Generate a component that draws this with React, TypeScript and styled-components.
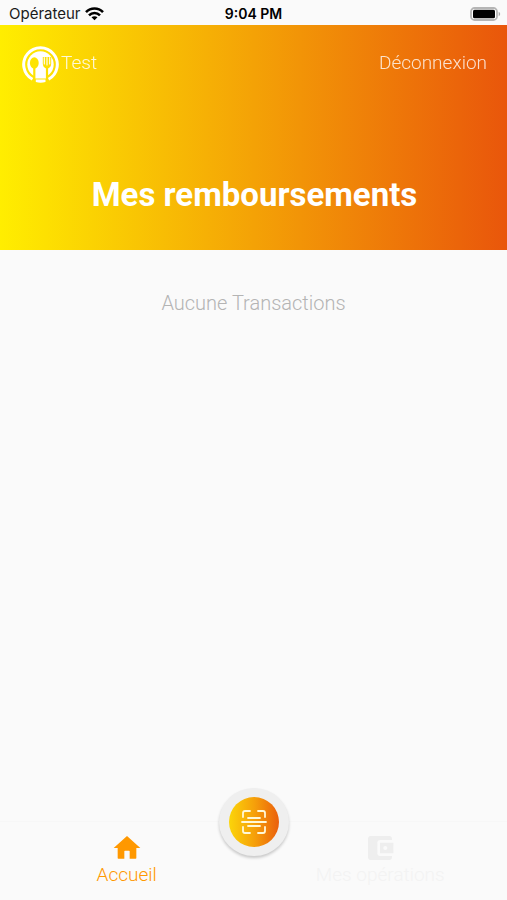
import React from "react";
import styled, { createGlobalStyle } from "styled-components";

const GlobalStyle = createGlobalStyle`
  *, *::before, *::after { box-sizing: border-box; }
  body {
    margin: 0;
    background: #fafafa;
    font-family: Roboto, "Liberation Sans", sans-serif;
  }
`;

const Screen = styled.div`
  display: flex;
  flex-direction: column;
  min-height: 100vh;
  background: #fafafa;
`;

const StatusBar = styled.div`
  display: grid;
  grid-template-columns: 1fr auto 1fr;
  align-items: center;
  height: 25px;
  padding: 2px 6px 0;
  font: 400 15px/20px Inter, "Liberation Sans", sans-serif;
  color: #1a1a1a;
`;

const Carrier = styled.div`
  display: flex;
  align-items: center;
  gap: 4px;
  padding-left: 3px;
`;

const Clock = styled.time`
  font-size: 14px;
  font-weight: 600;
  color: #000;
`;

const Battery = styled.svg`
  justify-self: end;
`;

const Header = styled.header`
  display: flex;
  flex-direction: column;
  height: 225px;
  padding: 20px 20px 0 22px;
  background: linear-gradient(90deg, #ffee00 0%, #f4a206 50%, #e9560b 100%);
  color: #fff;
`;

const TopRow = styled.div`
  display: flex;
  align-items: center;
  justify-content: space-between;
  height: 38px;
`;

const Account = styled.div`
  display: flex;
  align-items: center;
  gap: 2px;
`;

const AccountName = styled.span`
  padding-bottom: 3px;
  font-size: 19px;
  font-weight: 300;
  line-height: 24px;
  opacity: 0.85;
`;

const LogoutButton = styled.button`
  padding: 0 0 3px;
  border: 0;
  background: none;
  color: #fff;
  font: 300 19px/24px Roboto, sans-serif;
  opacity: 0.8;
  cursor: pointer;
`;

const Title = styled.h1`
  margin: 90px 0 0;
  font-size: 33px;
  font-weight: 700;
  line-height: 44px;
  text-align: center;
`;

const Content = styled.main`
  flex: 1;
  padding-top: 40px;
`;

const EmptyMessage = styled.p`
  margin: 0;
  font-size: 20px;
  font-weight: 300;
  line-height: 26px;
  text-align: center;
  color: #b4b4b4;
`;

const TabBar = styled.nav`
  position: relative;
  display: grid;
  grid-template-columns: 1fr 1fr;
  height: 79px;
  border-top: 1px solid #f7f7f7;
`;

const Tab = styled.a<{ $active?: boolean }>`
  display: flex;
  flex-direction: column;
  align-items: center;
  padding-top: 10px;
  color: ${(p) => (p.$active ? "#ff9800" : "#eeeeee")};
  text-decoration: none;
`;

const TabLabel = styled.span<{ $faint?: boolean }>`
  font-size: 19px;
  font-weight: 300;
  line-height: 22px;
  color: ${(p) => (p.$faint ? "#f3f3f3" : "inherit")};
`;

const ScanButton = styled.button`
  position: absolute;
  top: -34px;
  left: 50%;
  display: grid;
  place-items: center;
  width: 70px;
  height: 68px;
  margin-left: -35px;
  padding: 0;
  border: 0;
  border-radius: 50%;
  background: #efefef;
  box-shadow: 0 2px 3px rgba(0, 0, 0, 0.2);
  cursor: pointer;
`;

const ScanDisc = styled.span`
  display: grid;
  place-items: center;
  width: 50px;
  height: 50px;
  border-radius: 50%;
  background: linear-gradient(90deg, #fbd50a 0%, #f6a10a 50%, #ea5f0c 100%);
`;

function WifiIcon() {
  return (
    <svg width="19" height="14" viewBox="0 0 19 14" aria-hidden="true">
      <g fill="none" stroke="#000" strokeWidth="2.6">
        <path d="M1 5.1C5.8.3 13.2.3 18 5.1" />
        <path d="M4 8.3c3.1-3.1 7.9-3.1 11 0" />
      </g>
      <path d="M9.5 13.3 6.5 10.3c1.7-1.5 4.3-1.5 6 0z" fill="#000" />
    </svg>
  );
}

function BatteryIcon() {
  return (
    <Battery width="31" height="14" viewBox="0 0 31 14" role="img" aria-label="Batterie">
      <rect x="1" y="1" width="26" height="12" rx="3.6" fill="#fff" stroke="#b5b5b5" strokeWidth="1.8" />
      <rect x="3" y="2.8" width="22" height="8.4" rx="1.5" fill="#000" />
      <path d="M28.7 4.8c2 .8 2 3.6 0 4.4z" fill="#a8a8a8" />
    </Battery>
  );
}

function PlateLogo() {
  return (
    <svg width="37" height="37" viewBox="0 0 37 37" aria-hidden="true">
      <defs>
        <mask id="cutlery">
          <rect width="37" height="37" fill="#fff" />
          <ellipse cx="12.3" cy="17" rx="4.4" ry="5.8" fill="#000" />
          <path d="M12.3 21v16" stroke="#000" strokeWidth="2.2" />
          <path d="M20.8 11h8.4v6.500q0 4-4.200 5.500-4.200-1.500-4.200-5.500z" fill="#000" />
          <path d="M25 21v16" stroke="#000" strokeWidth="2.2" />
        </mask>
      </defs>
      <g mask="url(#cutlery)">
        <circle cx="18.5" cy="18.5" r="13.2" fill="#fff" />
        <path d="M13 24h11v8.5H13z" fill="#fff" />
        <path d="M10.5 33.3A16.8 16.8 0 1 1 26.5 33.3" fill="none" stroke="#fff" strokeWidth="3" />
      </g>
      <path d="M22.300 11.500v6.500M25 11.500v7.500M27.700 11.500v6.500" stroke="#fff" strokeWidth="1.1" strokeLinecap="round" />
      <path d="M13.8 33.5h9.700V36c-3.200 1-6.500 1-9.700 0z" fill="#fff" />
    </svg>
  );
}

function HomeIcon() {
  return (
    <svg width="32" height="32" viewBox="0 0 24 24" fill="currentColor" aria-hidden="true">
      <path d="M10 20v-5.500q0-.5.5-.5h3q.5 0 .5.5V20h4.500q.5 0 .5-.5V12h3L12 3 2 12h3v7.500q0 .5.5.5z" />
    </svg>
  );
}

function WalletIcon() {
  return (
    <svg width="32" height="32" viewBox="0 0 24 24" fill="currentColor" aria-hidden="true">
      <path d="M21 18v1c0 1.100-.9 2-2 2H5c-1.110 0-2-.9-2-2V5c0-1.100.89-2 2-2h14c1.100 0 2 .9 2 2v1h-9c-1.110 0-2 .9-2 2v8c0 1.100.89 2 2 2h9zm-9-2h10V8H12v8zm4-2.500c-.83 0-1.500-.67-1.500-1.500s.67-1.500 1.500-1.500 1.500.67 1.500 1.500-.67 1.500-1.500 1.500z" />
    </svg>
  );
}

function ScanIcon() {
  return (
    <svg
      width="26"
      height="26"
      viewBox="0 0 26 26"
      fill="none"
      stroke="#fff8d8"
      strokeWidth="1.8"
      strokeLinecap="round"
      strokeLinejoin="round"
      aria-hidden="true"
    >
      <path d="M2 8V4q0-2 2-2h5M17 2h5q2 0 2 2v4M2 18v4q0 2 2 2h5M17 24h5q2 0 2-2v-4" />
      <path d="M1 13h24M7 9h12M7 17h12" />
    </svg>
  );
}

export default function App() {
  return (
    <>
      <GlobalStyle />
      <Screen>
        <StatusBar>
          <Carrier>
            Opérateur
            <WifiIcon />
          </Carrier>
          <Clock>9:04 PM</Clock>
          <BatteryIcon />
        </StatusBar>
        <Header>
          <TopRow>
            <Account>
              <PlateLogo />
              <AccountName>Test</AccountName>
            </Account>
            <LogoutButton type="button">Déconnexion</LogoutButton>
          </TopRow>
          <Title>Mes remboursements</Title>
        </Header>
        <Content>
          <EmptyMessage>Aucune Transactions</EmptyMessage>
        </Content>
        <TabBar>
          <Tab href="#accueil" $active aria-current="page">
            <HomeIcon />
            <TabLabel>Accueil</TabLabel>
          </Tab>
          <Tab href="#operations">
            <WalletIcon />
            <TabLabel $faint>Mes opérations</TabLabel>
          </Tab>
          <ScanButton type="button" aria-label="Scanner">
            <ScanDisc>
              <ScanIcon />
            </ScanDisc>
          </ScanButton>
        </TabBar>
      </Screen>
    </>
  );
}
